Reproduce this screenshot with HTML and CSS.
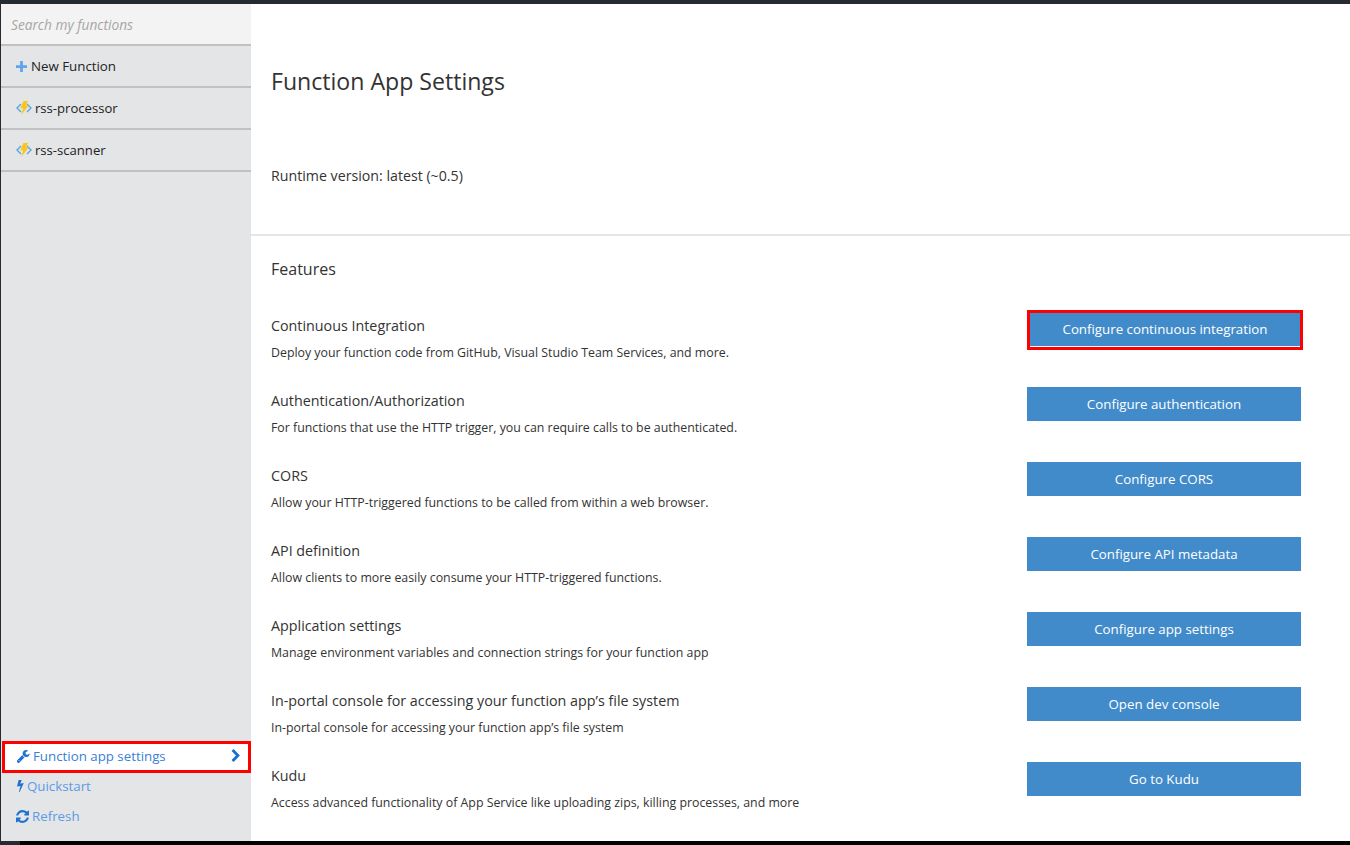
FILE: index.html
```html
<!DOCTYPE HTML>
<html>
    <head>
        <meta charset="UTF-8">
        <title>Function App Settings</title>
        <link rel="stylesheet" href="styles.css">
    </head>
    <body>
        <div class="topbar"></div>
        <div class="app">
            <div class="side">
                <div class="search">Search my functions</div>
                <div class="side-row">
                    <svg class="ico-plus" viewBox="0 0 12 12"><path d="M4.5 0h3v4.500h4.500v3h-4.500v4.500h-3v-4.500h-4.500v-3h4.500z"/></svg>
                    <span>New Function</span>
                </div>
                <div class="side-row fn-row">
                    <svg class="ico-fn" viewBox="0 0 16 14"><path class="fn-arrow" d="M5 3 1 7l4 4M11 3 15 7l-4 4"/><path class="fn-bolt" d="M7.500 0h4.600l-2.500 4.600h3.200l-7.600 9.400 1.900-6.800h-2.800z"/></svg>
                    <span>rss-processor</span>
                </div>
                <div class="side-row fn-row">
                    <svg class="ico-fn" viewBox="0 0 16 14"><path class="fn-arrow" d="M5 3 1 7l4 4M11 3 15 7l-4 4"/><path class="fn-bolt" d="M7.500 0h4.600l-2.500 4.600h3.200l-7.600 9.400 1.900-6.800h-2.800z"/></svg>
                    <span>rss-scanner</span>
                </div>
                <div class="side-foot">
                    <div class="foot-link selected">
                        <svg class="ico-sm wrench" viewBox="64 128 1640 1640"><path transform="translate(-64 0)" d="M448 1472q0-26-19-45t-45-19-45 19-19 45 19 45 45 19 45-19 19-45zm644-420l-682 682q-37 37-90 37-52 0-91-37l-106-108q-38-36-38-90 0-53 38-91l681-681q39 98 114.500 173.500t173.500 114.500zm634-435q0 39-23 106-47 134-164.500 217.500t-258.500 83.500q-185 0-316.500-131.500t-131.500-316.500 131.500-316.500 316.500-131.500q58 0 121.500 16.500t107.500 46.500q16 11 16 28t-16 28l-293 169v224l193 107q5-3 79-48.500t135.500-81 70.500-35.500q15 0 23.500 10t8.500 25z"/></svg>
                        <span class="foot-text">Function app settings</span>
                        <svg class="ico-chev" viewBox="300 0 1200 1792"><path d="M1363 877l-742 742q-19 19-45 19t-45-19l-166-166q-19-19-19-45t19-45l531-531-531-531q-19-19-19-45t19-45l166-166q19-19 45-19t45 19l742 742q19 19 19 45t-19 45z"/></svg>
                    </div>
                    <div class="foot-link">
                        <svg class="ico-bolt" viewBox="300 100 1100 1700"><path d="M1333 566q18 20 7 44l-540 1157q-13 25-42 25-4 0-14-2-17-5-25.500-19t-4.500-30l197-808-406 101q-4 1-12 1-18 0-31-11-18-15-13-39l201-825q4-14 16-23t28-9h328q19 0 32 12.500t13 29.500q0 8-5 18l-171 463 396-98q8-2 12-2 19 0 34 15z"/></svg>
                        <span class="foot-text">Quickstart</span>
                    </div>
                    <div class="foot-link">
                        <svg class="ico-sm" viewBox="128 128 1536 1536"><path d="M1639 1056q0 5-1 7-64 268-268 434.500t-478 166.500q-146 0-282.500-55t-243.500-157l-129 129q-19 19-45 19t-45-19-19-45v-448q0-26 19-45t45-19h448q26 0 45 19t19 45-19 45l-137 137q71 66 161 102t187 36q134 0 250-65t186-179q11-17 53-117 8-23 30-23h192q13 0 22.500 9.500t9.500 22.500zm25-800v448q0 26-19 45t-45 19h-448q-26 0-45-19t-19-45 19-45l138-138q-148-137-349-137-134 0-250 65t-186 179q-11 17-53 117-8 23-30 23h-199q-13 0-22.500-9.500t-9.500-22.500v-7q65-268 270-434.500t480-166.500q146 0 284 55.500t245 156.500l130-129q19-19 45-19t45 19 19 45z"/></svg>
                        <span class="foot-text">Refresh</span>
                    </div>
                </div>
            </div>
            <div class="main">
                <div class="head">
                    <h1>Function App Settings</h1>
                    <p class="runtime">Runtime version: latest (~0.5)</p>
                </div>
                <div class="features">
                    <h2>Features</h2>
                    <div class="feature marked">
                        <div class="info">
                            <h3>Continuous Integration</h3>
                            <p>Deploy your function code from GitHub, Visual Studio Team Services, and more.</p>
                        </div>
                        <div class="btn">Configure continuous integration</div>
                    </div>
                    <div class="feature">
                        <div class="info">
                            <h3>Authentication/Authorization</h3>
                            <p>For functions that use the HTTP trigger, you can require calls to be authenticated.</p>
                        </div>
                        <div class="btn">Configure authentication</div>
                    </div>
                    <div class="feature">
                        <div class="info">
                            <h3>CORS</h3>
                            <p>Allow your HTTP-triggered functions to be called from within a web browser.</p>
                        </div>
                        <div class="btn">Configure CORS</div>
                    </div>
                    <div class="feature">
                        <div class="info">
                            <h3>API definition</h3>
                            <p>Allow clients to more easily consume your HTTP-triggered functions.</p>
                        </div>
                        <div class="btn">Configure API metadata</div>
                    </div>
                    <div class="feature">
                        <div class="info">
                            <h3>Application settings</h3>
                            <p>Manage environment variables and connection strings for your function app</p>
                        </div>
                        <div class="btn">Configure app settings</div>
                    </div>
                    <div class="feature">
                        <div class="info">
                            <h3>In-portal console for accessing your function app’s file system</h3>
                            <p>In-portal console for accessing your function app’s file system</p>
                        </div>
                        <div class="btn">Open dev console</div>
                    </div>
                    <div class="feature">
                        <div class="info">
                            <h3>Kudu</h3>
                            <p>Access advanced functionality of App Service like uploading zips, killing processes, and more</p>
                        </div>
                        <div class="btn">Go to Kudu</div>
                    </div>
                </div>
            </div>
        </div>
        <div class="bottombar"></div>
    </body>
</html>
```

FILE: styles.css
```css
html,body{margin:0;height:100%;}
body{
    display:flex;
    flex-direction:column;
    height:845px;
    overflow:hidden;
    font-family:"Open Sans","Noto Sans",sans-serif;
    color:#333;
    background:#fff;
}
h1,h2,h3,p{margin:0;font-weight:normal;}
.topbar{height:4px;background:#262b30;flex:none;}
.bottombar{height:4px;background:linear-gradient(to right,#262b30 20px,#000 20px);flex:none;}
.app{display:flex;flex:1;min-height:0;}

/* left column */
.side{
    display:flex;
    flex-direction:column;
    width:250px;
    flex:none;
    border-left:1px solid #262b30;
    background:#e4e5e7;
    font-size:13.300px;
    color:#222;
}
.search{
    height:40px;
    padding-left:10px;
    line-height:42px;
    font-size:13.700px;
    font-style:italic;
    color:#a6a6a6;
    background:#f3f3f3;
    border-bottom:2px solid #c1c1c1;
}
.side-row{
    display:flex;
    align-items:center;
    height:40px;
    padding-left:15px;
    border-bottom:2px solid #c1c1c1;
}
.fn-row{font-size:13.100px;}
.ico-plus{width:11px;height:11px;margin-right:4px;fill:#62a3ee;}
.ico-fn{width:16px;height:14px;margin-right:3px;}
.fn-arrow{fill:none;stroke:#59a5e0;stroke-width:1.400;}
.fn-bolt{fill:#fcc419;}
.side-foot{margin-top:auto;padding-bottom:10px;}
.foot-link{
    display:flex;
    align-items:center;
    height:30px;
    padding-left:15px;
    color:#5b9be6;
    fill:#1f71d0;
}
.foot-link.selected{
    height:24px;
    margin:0 0 -2px 1px;
    padding:0 7px 2px 12px;
    color:#3a7fd5;
    background:#fff;
    border:3px solid #f00;
}
.foot-text{flex:1;}
.ico-sm{width:13px;height:13px;margin-right:3px;}
.ico-bolt{width:8px;height:14px;margin-right:3px;}
.ico-chev{width:10px;height:14px;fill:#1570cf;}

/* right column */
.main{flex:1;min-width:0;}
.head{
    height:230px;
    padding-left:20px;
    border-bottom:2px solid #e6e6e6;
}
h1{padding-top:59px;font-size:23.100px;line-height:36px;}
.runtime{padding-top:67px;font-size:14.200px;line-height:20px;}
.features{padding:21px 49px 0 20px;}
h2{font-size:16px;line-height:24px;margin-bottom:26px;}
.feature{
    display:flex;
    justify-content:space-between;
    align-items:flex-start;
    height:75px;
}
.info{padding-top:9px;}
h3{font-size:14.300px;line-height:20px;}
.info p{margin-top:7px;font-size:12.350px;line-height:20px;}
.btn{
    width:274px;
    height:34px;
    margin-top:5px;
    text-align:center;
    line-height:34px;
    font-size:13.300px;
    color:#fff;
    background:#428bca;
}
.marked .btn{
    width:270px;
    height:33px;
    margin:3px -2px 0 0;
    padding-bottom:1px;
    border:3px solid #f00;
    background:#428bca content-box;
    line-height:33px;
}
```
